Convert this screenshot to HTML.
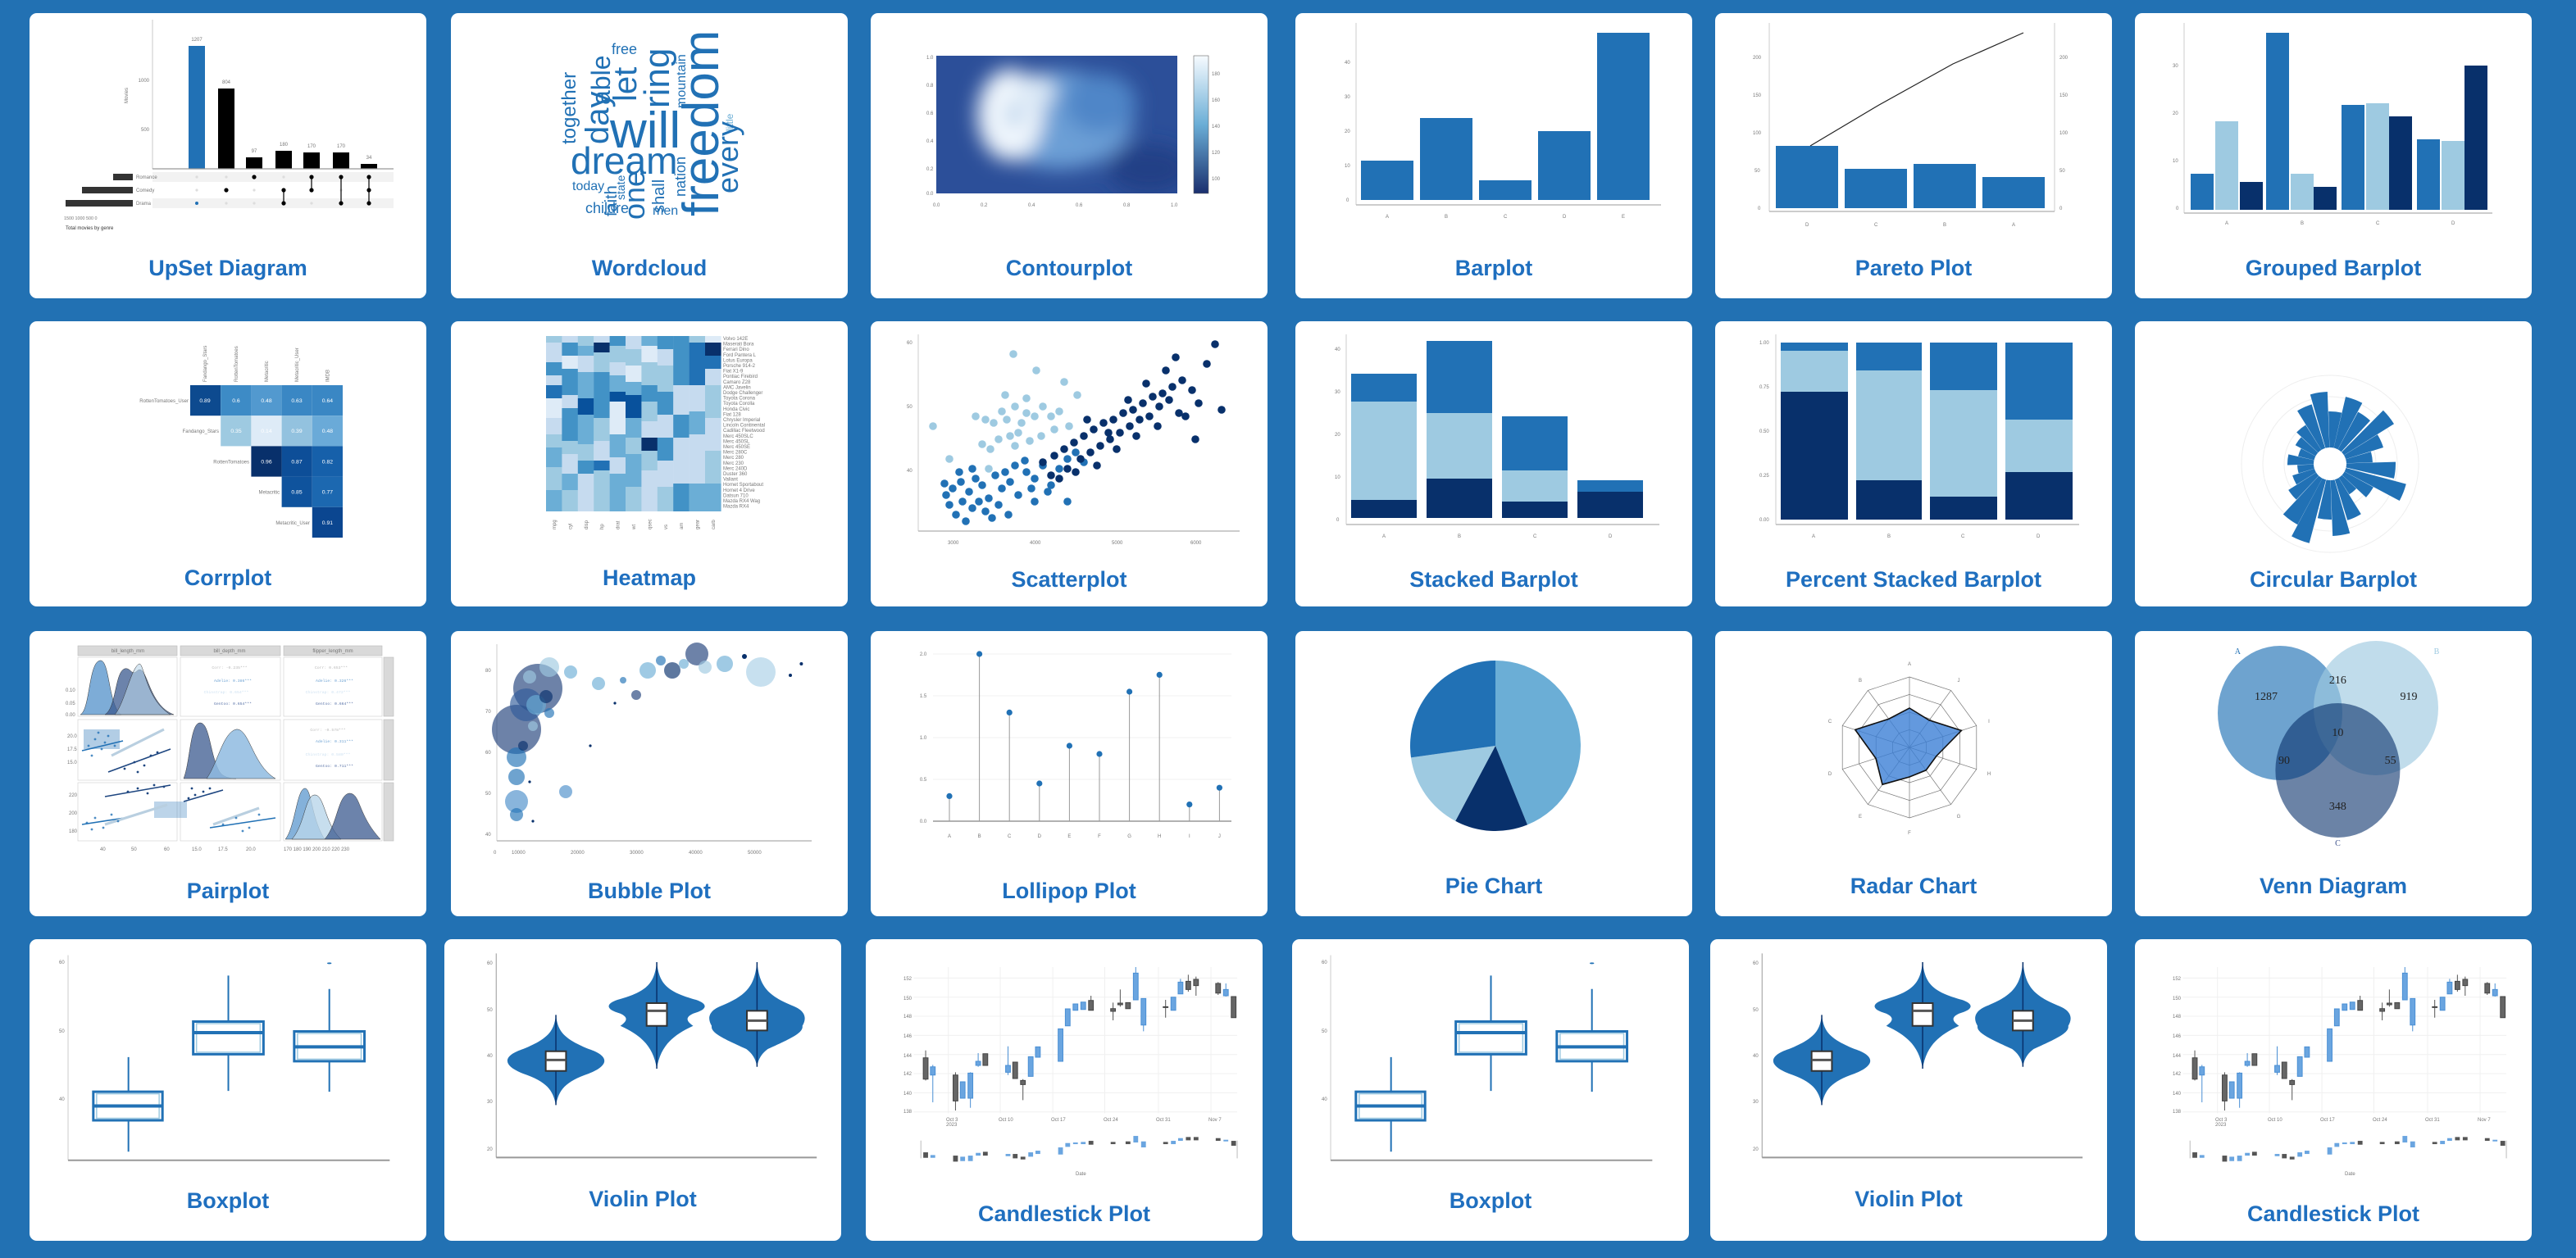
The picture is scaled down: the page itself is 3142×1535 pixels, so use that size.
<!DOCTYPE html>
<html><head><meta charset="utf-8">
<style>
html,body{margin:0;padding:0;}
body{width:3142px;height:1535px;background:#2271b3;position:relative;overflow:hidden;}
.c{position:absolute;background:#fff;border-radius:9px;width:484px;height:348px;overflow:hidden;}
.c.r4{height:368px;}
.c svg{display:block;width:100%;height:100%;}
.t{font-family:"Liberation Sans Narrow","Liberation Sans",sans-serif;font-weight:bold;font-size:13.5px;fill:#1f6fbf;text-anchor:middle;}
.s{font-family:"Liberation Sans",sans-serif;font-size:3px;fill:#777;}
.w{font-family:"Liberation Sans",sans-serif;fill:#2171b5;}
.v{font-family:"Liberation Serif",serif;font-size:7px;fill:#222;text-anchor:middle;}
.ns{vector-effect:non-scaling-stroke;}
</style></head><body>

<!-- ROW 1 -->
<div class="c" style="left:36px;top:16px"><svg viewBox="0 0 242 174">
<line x1="75" y1="4" x2="75" y2="95" stroke="#bbb" stroke-width=".4"/>
<text class="s" x="73" y="42" text-anchor="end" font-size="2.5">1000</text>
<text class="s" x="73" y="72" text-anchor="end" font-size="2.5">500</text>
<text class="s" x="60" y="55" transform="rotate(-90 60 55)" font-size="2.5">Movies</text>
<rect x="97" y="20" width="10" height="75" fill="#2171b5"/>
<rect x="115" y="46" width="10" height="49" fill="#000"/>
<rect x="132" y="88" width="10" height="7" fill="#000"/>
<rect x="150" y="84" width="10" height="11" fill="#000"/>
<rect x="167" y="85" width="10" height="10" fill="#000"/>
<rect x="185" y="85" width="10" height="10" fill="#000"/>
<rect x="202" y="92" width="10" height="3" fill="#000"/>
<g class="s" text-anchor="middle" font-size="3"><text x="102" y="17">1207</text><text x="120" y="43">804</text><text x="137" y="85">97</text><text x="155" y="81">180</text><text x="172" y="82">170</text><text x="190" y="82">170</text><text x="207" y="89">34</text></g>
<line x1="75" y1="95" x2="222" y2="95" stroke="#999" stroke-width=".6"/>
<rect x="75" y="97" width="147" height="6" fill="#f2f2f2"/>
<rect x="75" y="113" width="147" height="6" fill="#f2f2f2"/>
<g fill="#ddd"><circle cx="102" cy="100" r=".8"/><circle cx="120" cy="100" r=".8"/><circle cx="155" cy="100" r=".8"/><circle cx="102" cy="108" r=".8"/><circle cx="137" cy="108" r=".8"/><circle cx="190" cy="108" r=".8"/><circle cx="120" cy="116" r=".8"/><circle cx="137" cy="116" r=".8"/><circle cx="172" cy="116" r=".8"/></g>
<g fill="#000" stroke="#000" stroke-width=".6"><circle cx="120" cy="108" r="1"/><circle cx="137" cy="100" r="1"/><line x1="155" y1="108" x2="155" y2="116"/><circle cx="155" cy="108" r="1"/><circle cx="155" cy="116" r="1"/><line x1="172" y1="100" x2="172" y2="108"/><circle cx="172" cy="100" r="1"/><circle cx="172" cy="108" r="1"/><line x1="190" y1="100" x2="190" y2="116"/><circle cx="190" cy="100" r="1"/><circle cx="190" cy="116" r="1"/><line x1="207" y1="100" x2="207" y2="116"/><circle cx="207" cy="100" r="1"/><circle cx="207" cy="108" r="1"/><circle cx="207" cy="116" r="1"/></g>
<circle cx="102" cy="116" r="1" fill="#2171b5"/>
<rect x="51" y="98" width="12" height="4" fill="#333"/><rect x="32" y="106" width="31" height="4" fill="#333"/><rect x="22" y="114" width="41" height="4" fill="#333"/>
<g class="s" font-size="3"><text x="65" y="101">Romance</text><text x="65" y="109">Comedy</text><text x="65" y="117">Drama</text>
<text x="21" y="126" font-size="2.7">1500 1000 500  0</text><text x="22" y="132" fill="#333">Total movies by genre</text></g>
<text class="t" x="121" y="160">UpSet Diagram</text></svg></div>

<div class="c" style="left:550px;top:16px"><svg viewBox="0 0 242 174">
<text class="w" font-size="12" transform="translate(76,80) rotate(-90)">together</text>
<text class="w" font-size="20" transform="translate(96,80) rotate(-90)">day</text>
<text class="w" font-size="16" transform="translate(97,56) rotate(-90)">able</text>
<text class="w" font-size="9" x="98" y="25">free</text>
<text class="w" font-size="20" transform="translate(113,54) rotate(-90)">let</text>
<text class="w" font-size="22" transform="translate(133,58) rotate(-90)">ring</text>
<text class="w" font-size="8" transform="translate(143,58) rotate(-90)">mountain</text>
<text class="w" font-size="31" x="97" y="82">will</text>
<text class="w" font-size="31" transform="translate(163,124) rotate(-90)">freedom</text>
<text class="w" font-size="6" fill="#6baed6" transform="translate(172,72) rotate(-90)" style="fill:#6baed6">little</text>
<text class="w" font-size="18" transform="translate(175,110) rotate(-90)">every</text>
<text class="w" font-size="23" x="73" y="98">dream</text>
<text class="w" font-size="8" x="74" y="108">today</text>
<text class="w" font-size="10" transform="translate(101,124) rotate(-90)">faith</text>
<text class="w" font-size="7" transform="translate(106,114) rotate(-90)">state</text>
<text class="w" font-size="18" transform="translate(118,126) rotate(-90)">one</text>
<text class="w" font-size="10" transform="translate(130,122) rotate(-90)">shall</text>
<text class="w" font-size="9" transform="translate(143,112) rotate(-90)">nation</text>
<text class="w" font-size="9" x="82" y="122">childre</text>
<text class="w" font-size="8" x="123" y="123">men</text>
<text class="t" x="121" y="160">Wordcloud</text></svg></div>

<div class="c" style="left:1062px;top:16px"><svg viewBox="0 0 242 174">
<defs><filter id="bl" x="-50%" y="-50%" width="200%" height="200%"><feGaussianBlur stdDeviation="6"/></filter>
<linearGradient id="cb" x1="0" y1="0" x2="0" y2="1"><stop offset="0" stop-color="#f7fbff"/><stop offset=".5" stop-color="#6baed6"/><stop offset="1" stop-color="#1a2f6e"/></linearGradient>
<clipPath id="cp"><rect x="40" y="26" width="147" height="84"/></clipPath></defs>
<rect x="40" y="26" width="147" height="84" fill="#2c4f99"/>
<g clip-path="url(#cp)" filter="url(#bl)">
<ellipse cx="115" cy="65" rx="45" ry="30" fill="#6c9fd6"/>
<ellipse cx="140" cy="55" rx="22" ry="18" fill="#4f86c8"/>
<ellipse cx="85" cy="62" rx="20" ry="28" fill="#eef5fc"/>
<ellipse cx="100" cy="48" rx="12" ry="10" fill="#dce9f6"/>
<ellipse cx="88" cy="62" rx="4" ry="5" fill="#8ab6e0"/>
<ellipse cx="170" cy="95" rx="25" ry="15" fill="#243f86"/>
</g>
<rect x="197" y="26" width="9" height="84" fill="url(#cb)" stroke="#666" stroke-width=".3"/>
<g class="s" font-size="2.5"><text x="34" y="28">1.0</text><text x="34" y="45">0.8</text><text x="34" y="62">0.6</text><text x="34" y="79">0.4</text><text x="34" y="96">0.2</text><text x="34" y="111">0.0</text>
<text x="38" y="118">0.0</text><text x="67" y="118">0.2</text><text x="96" y="118">0.4</text><text x="125" y="118">0.6</text><text x="154" y="118">0.8</text><text x="183" y="118">1.0</text>
<text x="208" y="38">180</text><text x="208" y="54">160</text><text x="208" y="70">140</text><text x="208" y="86">120</text><text x="208" y="102">100</text></g>
<text class="t" x="121" y="160">Contourplot</text></svg></div>

<div class="c" style="left:1580px;top:16px"><svg viewBox="0 0 242 174">
<line x1="37" y1="6" x2="37" y2="117" stroke="#ccc" stroke-width=".5"/><line x1="37" y1="117" x2="223" y2="117" stroke="#bbb" stroke-width=".8"/>
<g fill="#2171b5"><rect x="40" y="90" width="32" height="24"/><rect x="76" y="64" width="32" height="50"/><rect x="112" y="102" width="32" height="12"/><rect x="148" y="72" width="32" height="42"/><rect x="184" y="12" width="32" height="102"/></g>
<g class="s" font-size="3"><text x="31" y="115">0</text><text x="30" y="94">10</text><text x="30" y="73">20</text><text x="30" y="52">30</text><text x="30" y="31">40</text>
<text x="55" y="125">A</text><text x="91" y="125">B</text><text x="127" y="125">C</text><text x="163" y="125">D</text><text x="199" y="125">E</text></g>
<text class="t" x="121" y="160">Barplot</text></svg></div>

<div class="c" style="left:2092px;top:16px"><svg viewBox="0 0 242 174">
<line x1="33" y1="6" x2="33" y2="121" stroke="#ccc" stroke-width=".5"/><line x1="207" y1="6" x2="207" y2="121" stroke="#ccc" stroke-width=".5"/><line x1="33" y1="121" x2="207" y2="121" stroke="#bbb" stroke-width=".8"/>
<g fill="#2171b5"><rect x="37" y="81" width="38" height="38"/><rect x="79" y="95" width="38" height="24"/><rect x="121" y="92" width="38" height="27"/><rect x="163" y="100" width="38" height="19"/></g>
<polyline points="58,81 100,56 145,31 188,12" fill="none" stroke="#222" stroke-width=".6"/>
<g class="s" font-size="3"><text x="26" y="120">0</text><text x="24" y="97">50</text><text x="23" y="74">100</text><text x="23" y="51">150</text><text x="23" y="28">200</text>
<text x="210" y="120">0</text><text x="210" y="97">50</text><text x="210" y="74">100</text><text x="210" y="51">150</text><text x="210" y="28">200</text>
<text x="55" y="130">D</text><text x="97" y="130">C</text><text x="139" y="130">B</text><text x="181" y="130">A</text></g>
<text class="t" x="121" y="160">Pareto Plot</text></svg></div>

<div class="c" style="left:2604px;top:16px"><svg viewBox="0 0 242 174">
<line x1="30" y1="6" x2="30" y2="122" stroke="#ccc" stroke-width=".5"/><line x1="30" y1="122" x2="218" y2="122" stroke="#bbb" stroke-width=".8"/>
<g fill="#2171b5"><rect x="34" y="98" width="14" height="22"/><rect x="80" y="12" width="14" height="108"/><rect x="126" y="56" width="14" height="64"/><rect x="172" y="77" width="14" height="43"/></g>
<g fill="#9ecae1"><rect x="49" y="66" width="14" height="54"/><rect x="95" y="98" width="14" height="22"/><rect x="141" y="55" width="14" height="65"/><rect x="187" y="78" width="14" height="42"/></g>
<g fill="#08306b"><rect x="64" y="103" width="14" height="17"/><rect x="109" y="106" width="14" height="14"/><rect x="155" y="63" width="14" height="57"/><rect x="201" y="32" width="14" height="88"/></g>
<g class="s" font-size="3"><text x="25" y="120">0</text><text x="23" y="91">10</text><text x="23" y="62">20</text><text x="23" y="33">30</text>
<text x="55" y="129">A</text><text x="101" y="129">B</text><text x="147" y="129">C</text><text x="193" y="129">D</text></g>
<text class="t" x="121" y="160">Grouped Barplot</text></svg></div>

<!-- ROW 2 -->
<div class="c" style="left:36px;top:392px"><svg viewBox="0 0 242 174">
<g font-family="Liberation Sans" font-size="3.4" fill="#fff" text-anchor="middle">
<rect x="98" y="39" width="18.6" height="18.6" fill="#0d4a8f"/><rect x="116.6" y="39" width="18.6" height="18.6" fill="#3d8bc6"/><rect x="135.2" y="39" width="18.6" height="18.6" fill="#5299cf"/><rect x="153.8" y="39" width="18.6" height="18.6" fill="#3a87c4"/><rect x="172.4" y="39" width="18.6" height="18.6" fill="#3a87c4"/>
<rect x="116.6" y="57.6" width="18.6" height="18.6" fill="#9ecae1"/><rect x="135.2" y="57.6" width="18.6" height="18.6" fill="#deebf7"/><rect x="153.8" y="57.6" width="18.6" height="18.6" fill="#93c2df"/><rect x="172.4" y="57.6" width="18.6" height="18.6" fill="#6aaad8"/>
<rect x="135.2" y="76.2" width="18.6" height="18.6" fill="#08306b"/><rect x="153.8" y="76.2" width="18.6" height="18.6" fill="#0d4e98"/><rect x="172.4" y="76.2" width="18.6" height="18.6" fill="#1660aa"/>
<rect x="153.8" y="94.8" width="18.6" height="18.6" fill="#0f539d"/><rect x="172.4" y="94.8" width="18.6" height="18.6" fill="#1c68b0"/>
<rect x="172.4" y="113.4" width="18.6" height="18.6" fill="#0b4690"/>
<text x="107" y="49.5">0.89</text><text x="126" y="49.5">0.6</text><text x="144.5" y="49.5">0.48</text><text x="163" y="49.5">0.63</text><text x="181.7" y="49.5">0.64</text>
<text x="126" y="68">0.35</text><text x="144.5" y="68">0.14</text><text x="163" y="68">0.39</text><text x="181.7" y="68">0.48</text>
<text x="144.5" y="86.7">0.96</text><text x="163" y="86.7">0.87</text><text x="181.7" y="86.7">0.82</text>
<text x="163" y="105.3">0.85</text><text x="181.7" y="105.3">0.77</text><text x="181.7" y="124">0.91</text></g>
<g class="s" font-size="3.2" fill="#333" text-anchor="end"><text x="97" y="49.5">RottenTomatoes_User</text><text x="115.5" y="68">Fandango_Stars</text><text x="134" y="86.7">RottenTomatoes</text><text x="152.6" y="105.3">Metacritic</text><text x="171" y="124">Metacritic_User</text></g>
<g class="s" font-size="3.2" fill="#333"><text transform="translate(108,37) rotate(-90)">Fandango_Stars</text><text transform="translate(127,37) rotate(-90)">RottenTomatoes</text><text transform="translate(145.5,37) rotate(-90)">Metacritic</text><text transform="translate(164,37) rotate(-90)">Metacritic_User</text><text transform="translate(182.7,37) rotate(-90)">IMDB</text></g>
<text class="t" x="121" y="161">Corrplot</text></svg></div>

<div class="c" style="left:550px;top:392px"><svg viewBox="0 0 242 174">
<g>
<g transform="translate(58,0)"><rect y="9" width="9.8" height="4" fill="#9ecae1"/><rect y="13" width="9.8" height="12" fill="#c6dbef"/><rect y="25" width="9.8" height="8" fill="#4292c6"/><rect y="33" width="9.8" height="6" fill="#c6dbef"/><rect y="39" width="9.8" height="8" fill="#2171b5"/><rect y="47" width="9.8" height="12" fill="#deebf7"/><rect y="59" width="9.8" height="10" fill="#c6dbef"/><rect y="69" width="9.8" height="8" fill="#9ecae1"/><rect y="77" width="9.8" height="12" fill="#6baed6"/><rect y="89" width="9.8" height="14" fill="#9ecae1"/><rect y="103" width="9.8" height="13" fill="#6baed6"/></g>
<g transform="translate(67.7,0)"><rect y="9" width="9.8" height="4" fill="#c6dbef"/><rect y="13" width="9.8" height="8" fill="#4292c6"/><rect y="21" width="9.8" height="8" fill="#deebf7"/><rect y="29" width="9.8" height="16" fill="#4292c6"/><rect y="45" width="9.8" height="8" fill="#c6dbef"/><rect y="53" width="9.8" height="20" fill="#4292c6"/><rect y="73" width="9.8" height="8" fill="#9ecae1"/><rect y="81" width="9.8" height="12" fill="#c6dbef"/><rect y="93" width="9.8" height="10" fill="#6baed6"/><rect y="103" width="9.8" height="13" fill="#9ecae1"/></g>
<g transform="translate(77.4,0)"><rect y="9" width="9.8" height="6" fill="#9ecae1"/><rect y="15" width="9.8" height="6" fill="#6baed6"/><rect y="21" width="9.8" height="10" fill="#c6dbef"/><rect y="31" width="9.8" height="16" fill="#6baed6"/><rect y="47" width="9.8" height="10" fill="#08519c"/><rect y="57" width="9.8" height="18" fill="#6baed6"/><rect y="75" width="9.8" height="10" fill="#9ecae1"/><rect y="85" width="9.8" height="8" fill="#4292c6"/><rect y="93" width="9.8" height="23" fill="#c6dbef"/></g>
<g transform="translate(87.1,0)"><rect y="9" width="9.8" height="4" fill="#c6dbef"/><rect y="13" width="9.8" height="6" fill="#08306b"/><rect y="19" width="9.8" height="12" fill="#9ecae1"/><rect y="31" width="9.8" height="14" fill="#4292c6"/><rect y="45" width="9.8" height="14" fill="#4292c6"/><rect y="59" width="9.8" height="14" fill="#9ecae1"/><rect y="73" width="9.8" height="12" fill="#c6dbef"/><rect y="85" width="9.8" height="6" fill="#2171b5"/><rect y="91" width="9.8" height="25" fill="#9ecae1"/></g>
<g transform="translate(96.8,0)"><rect y="9" width="9.8" height="6" fill="#4292c6"/><rect y="15" width="9.8" height="10" fill="#9ecae1"/><rect y="25" width="9.8" height="8" fill="#c6dbef"/><rect y="33" width="9.8" height="10" fill="#6baed6"/><rect y="43" width="9.8" height="6" fill="#08519c"/><rect y="49" width="9.8" height="20" fill="#deebf7"/><rect y="69" width="9.8" height="14" fill="#6baed6"/><rect y="83" width="9.8" height="10" fill="#c6dbef"/><rect y="93" width="9.8" height="23" fill="#6baed6"/></g>
<g transform="translate(106.5,0)"><rect y="9" width="9.8" height="8" fill="#c6dbef"/><rect y="17" width="9.8" height="10" fill="#9ecae1"/><rect y="27" width="9.8" height="10" fill="#deebf7"/><rect y="37" width="9.8" height="8" fill="#6baed6"/><rect y="45" width="9.8" height="14" fill="#08519c"/><rect y="59" width="9.8" height="12" fill="#6baed6"/><rect y="71" width="9.8" height="10" fill="#9ecae1"/><rect y="81" width="9.8" height="20" fill="#6baed6"/><rect y="101" width="9.8" height="15" fill="#9ecae1"/></g>
<g transform="translate(116.2,0)"><rect y="9" width="9.8" height="6" fill="#6baed6"/><rect y="15" width="9.8" height="10" fill="#deebf7"/><rect y="25" width="9.8" height="14" fill="#9ecae1"/><rect y="39" width="9.8" height="10" fill="#4292c6"/><rect y="49" width="9.8" height="12" fill="#9ecae1"/><rect y="61" width="9.8" height="10" fill="#c6dbef"/><rect y="71" width="9.8" height="8" fill="#08306b"/><rect y="79" width="9.8" height="12" fill="#9ecae1"/><rect y="91" width="9.8" height="25" fill="#c6dbef"/></g>
<g transform="translate(125.9,0)"><rect y="9" width="9.8" height="8" fill="#4292c6"/><rect y="17" width="9.8" height="10" fill="#c6dbef"/><rect y="27" width="9.8" height="16" fill="#9ecae1"/><rect y="43" width="9.8" height="14" fill="#4292c6"/><rect y="57" width="9.8" height="14" fill="#c6dbef"/><rect y="71" width="9.8" height="14" fill="#4292c6"/><rect y="85" width="9.8" height="16" fill="#c6dbef"/><rect y="101" width="9.8" height="15" fill="#9ecae1"/></g>
<g transform="translate(135.6,0)"><rect y="9" width="9.8" height="30" fill="#4292c6"/><rect y="39" width="9.8" height="18" fill="#c6dbef"/><rect y="57" width="9.8" height="14" fill="#4292c6"/><rect y="71" width="9.8" height="28" fill="#c6dbef"/><rect y="99" width="9.8" height="17" fill="#4292c6"/></g>
<g transform="translate(145.3,0)"><rect y="9" width="9.8" height="4" fill="#9ecae1"/><rect y="13" width="9.8" height="26" fill="#2171b5"/><rect y="39" width="9.8" height="16" fill="#c6dbef"/><rect y="55" width="9.8" height="14" fill="#6baed6"/><rect y="69" width="9.8" height="30" fill="#c6dbef"/><rect y="99" width="9.8" height="17" fill="#6baed6"/></g>
<g transform="translate(155,0)"><rect y="9" width="9.8" height="4" fill="#deebf7"/><rect y="13" width="9.8" height="8" fill="#08306b"/><rect y="21" width="9.8" height="8" fill="#2171b5"/><rect y="29" width="9.8" height="10" fill="#c6dbef"/><rect y="39" width="9.8" height="20" fill="#9ecae1"/><rect y="59" width="9.8" height="20" fill="#c6dbef"/><rect y="79" width="9.8" height="20" fill="#9ecae1"/><rect y="99" width="9.8" height="17" fill="#6baed6"/></g>
</g>
<g class="s" font-size="2.3" fill="#333"><text x="166" y="11.5">Volvo 142E</text><text x="166" y="14.8">Maserati Bora</text><text x="166" y="18.1">Ferrari Dino</text><text x="166" y="21.4">Ford Pantera L</text><text x="166" y="24.7">Lotus Europa</text><text x="166" y="28">Porsche 914-2</text><text x="166" y="31.3">Fiat X1-9</text><text x="166" y="34.6">Pontiac Firebird</text><text x="166" y="37.9">Camaro Z28</text><text x="166" y="41.2">AMC Javelin</text><text x="166" y="44.5">Dodge Challenger</text><text x="166" y="47.8">Toyota Corona</text><text x="166" y="51.1">Toyota Corolla</text><text x="166" y="54.4">Honda Civic</text><text x="166" y="57.7">Fiat 128</text><text x="166" y="61">Chrysler Imperial</text><text x="166" y="64.3">Lincoln Continental</text><text x="166" y="67.6">Cadillac Fleetwood</text><text x="166" y="70.9">Merc 450SLC</text><text x="166" y="74.2">Merc 450SL</text><text x="166" y="77.5">Merc 450SE</text><text x="166" y="80.8">Merc 280C</text><text x="166" y="84.1">Merc 280</text><text x="166" y="87.4">Merc 230</text><text x="166" y="90.7">Merc 240D</text><text x="166" y="94">Duster 360</text><text x="166" y="97.3">Valiant</text><text x="166" y="100.6">Hornet Sportabout</text><text x="166" y="103.9">Hornet 4 Drive</text><text x="166" y="107.2">Datsun 710</text><text x="166" y="110.5">Mazda RX4 Wag</text><text x="166" y="113.8">Mazda RX4</text></g>
<g class="s" font-size="2.5" fill="#333"><text transform="translate(64,127) rotate(-90)">mpg</text><text transform="translate(73.7,127) rotate(-90)">cyl</text><text transform="translate(83.4,127) rotate(-90)">disp</text><text transform="translate(93.1,127) rotate(-90)">hp</text><text transform="translate(102.8,127) rotate(-90)">drat</text><text transform="translate(112.5,127) rotate(-90)">wt</text><text transform="translate(122.2,127) rotate(-90)">qsec</text><text transform="translate(131.9,127) rotate(-90)">vs</text><text transform="translate(141.6,127) rotate(-90)">am</text><text transform="translate(151.3,127) rotate(-90)">gear</text><text transform="translate(161,127) rotate(-90)">carb</text></g>
<text class="t" x="121" y="161">Heatmap</text></svg></div>

<div class="c" style="left:1062px;top:392px"><svg viewBox="0 0 242 174">
<line x1="29" y1="8" x2="29" y2="128" stroke="#ccc" stroke-width=".5"/><line x1="29" y1="128" x2="225" y2="128" stroke="#bbb" stroke-width=".8"/>
<g class="s" font-size="3"><text x="22" y="14">60</text><text x="22" y="53">50</text><text x="22" y="92">40</text><text x="47" y="136">3000</text><text x="97" y="136">4000</text><text x="147" y="136">5000</text><text x="195" y="136">6000</text></g>
<g fill="#9ecae1"><circle cx="87" cy="20" r="2.4"/><circle cx="101" cy="30" r="2.4"/><circle cx="118" cy="37" r="2.4"/><circle cx="126" cy="45" r="2.4"/><circle cx="80" cy="55" r="2.4"/><circle cx="88" cy="52" r="2.4"/><circle cx="95" cy="56" r="2.4"/><circle cx="100" cy="58" r="2.4"/><circle cx="105" cy="52" r="2.4"/><circle cx="70" cy="60" r="2.4"/><circle cx="75" cy="62" r="2.4"/><circle cx="83" cy="60" r="2.4"/><circle cx="92" cy="62" r="2.4"/><circle cx="110" cy="58" r="2.4"/><circle cx="115" cy="55" r="2.4"/><circle cx="78" cy="72" r="2.4"/><circle cx="85" cy="70" r="2.4"/><circle cx="90" cy="68" r="2.4"/><circle cx="97" cy="73" r="2.4"/><circle cx="104" cy="70" r="2.4"/><circle cx="68" cy="75" r="2.4"/><circle cx="73" cy="78" r="2.4"/><circle cx="64" cy="58" r="2.4"/><circle cx="38" cy="64" r="2.4"/><circle cx="48" cy="84" r="2.4"/><circle cx="88" cy="76" r="2.4"/><circle cx="121" cy="64" r="2.4"/><circle cx="112" cy="66" r="2.4"/><circle cx="95" cy="47" r="2.4"/><circle cx="82" cy="45" r="2.4"/><circle cx="72" cy="90" r="2.4"/></g>
<g fill="#2171b5"><circle cx="45" cy="99" r="2.4"/><circle cx="50" cy="102" r="2.4"/><circle cx="55" cy="98" r="2.4"/><circle cx="60" cy="104" r="2.4"/><circle cx="64" cy="96" r="2.4"/><circle cx="68" cy="100" r="2.4"/><circle cx="72" cy="108" r="2.4"/><circle cx="76" cy="94" r="2.4"/><circle cx="80" cy="102" r="2.4"/><circle cx="85" cy="98" r="2.4"/><circle cx="90" cy="106" r="2.4"/><circle cx="95" cy="92" r="2.4"/><circle cx="100" cy="96" r="2.4"/><circle cx="105" cy="88" r="2.4"/><circle cx="110" cy="100" r="2.4"/><circle cx="115" cy="90" r="2.4"/><circle cx="120" cy="84" r="2.4"/><circle cx="125" cy="80" r="2.4"/><circle cx="130" cy="86" r="2.4"/><circle cx="48" cy="112" r="2.4"/><circle cx="56" cy="110" r="2.4"/><circle cx="62" cy="114" r="2.4"/><circle cx="70" cy="116" r="2.4"/><circle cx="78" cy="112" r="2.4"/><circle cx="84" cy="118" r="2.4"/><circle cx="52" cy="118" r="2.4"/><circle cx="58" cy="122" r="2.4"/><circle cx="66" cy="110" r="2.4"/><circle cx="88" cy="88" r="2.4"/><circle cx="94" cy="85" r="2.4"/><circle cx="100" cy="110" r="2.4"/><circle cx="108" cy="104" r="2.4"/><circle cx="46" cy="106" r="2.4"/><circle cx="74" cy="120" r="2.4"/><circle cx="120" cy="110" r="2.4"/><circle cx="62" cy="90" r="2.4"/><circle cx="82" cy="92" r="2.4"/><circle cx="98" cy="102" r="2.4"/><circle cx="54" cy="92" r="2.4"/></g>
<g fill="#08306b"><circle cx="105" cy="86" r="2.4"/><circle cx="112" cy="82" r="2.4"/><circle cx="118" cy="78" r="2.4"/><circle cx="124" cy="74" r="2.4"/><circle cx="130" cy="70" r="2.4"/><circle cx="136" cy="66" r="2.4"/><circle cx="142" cy="62" r="2.4"/><circle cx="148" cy="60" r="2.4"/><circle cx="154" cy="56" r="2.4"/><circle cx="160" cy="54" r="2.4"/><circle cx="166" cy="50" r="2.4"/><circle cx="172" cy="46" r="2.4"/><circle cx="178" cy="44" r="2.4"/><circle cx="184" cy="40" r="2.4"/><circle cx="190" cy="36" r="2.4"/><circle cx="196" cy="42" r="2.4"/><circle cx="200" cy="50" r="2.4"/><circle cx="205" cy="26" r="2.4"/><circle cx="210" cy="14" r="2.4"/><circle cx="214" cy="54" r="2.4"/><circle cx="120" cy="90" r="2.4"/><circle cx="128" cy="84" r="2.4"/><circle cx="134" cy="80" r="2.4"/><circle cx="140" cy="76" r="2.4"/><circle cx="146" cy="72" r="2.4"/><circle cx="152" cy="68" r="2.4"/><circle cx="158" cy="64" r="2.4"/><circle cx="164" cy="60" r="2.4"/><circle cx="170" cy="58" r="2.4"/><circle cx="176" cy="52" r="2.4"/><circle cx="182" cy="48" r="2.4"/><circle cx="188" cy="56" r="2.4"/><circle cx="115" cy="96" r="2.4"/><circle cx="125" cy="92" r="2.4"/><circle cx="138" cy="88" r="2.4"/><circle cx="150" cy="78" r="2.4"/><circle cx="162" cy="70" r="2.4"/><circle cx="175" cy="64" r="2.4"/><circle cx="192" cy="58" r="2.4"/><circle cx="145" cy="68" r="2.4"/><circle cx="157" cy="48" r="2.4"/><circle cx="168" cy="38" r="2.4"/><circle cx="180" cy="30" r="2.4"/><circle cx="132" cy="60" r="2.4"/><circle cx="110" cy="94" r="2.4"/><circle cx="198" cy="72" r="2.4"/><circle cx="186" cy="22" r="2.4"/></g>
<text class="t" x="121" y="162">Scatterplot</text></svg></div>

<div class="c" style="left:1580px;top:392px"><svg viewBox="0 0 242 174">
<line x1="31" y1="8" x2="31" y2="124" stroke="#ccc" stroke-width=".5"/><line x1="31" y1="124" x2="222" y2="124" stroke="#bbb" stroke-width=".8"/>
<rect x="34" y="32" width="40" height="17" fill="#2171b5"/><rect x="34" y="49" width="40" height="60" fill="#9ecae1"/><rect x="34" y="109" width="40" height="11" fill="#08306b"/>
<rect x="80" y="12" width="40" height="44" fill="#2171b5"/><rect x="80" y="56" width="40" height="40" fill="#9ecae1"/><rect x="80" y="96" width="40" height="24" fill="#08306b"/>
<rect x="126" y="58" width="40" height="33" fill="#2171b5"/><rect x="126" y="91" width="40" height="19" fill="#9ecae1"/><rect x="126" y="110" width="40" height="10" fill="#08306b"/>
<rect x="172" y="97" width="40" height="7" fill="#2171b5"/><rect x="172" y="104" width="40" height="16" fill="#08306b"/>
<g class="s" font-size="3"><text x="25" y="122">0</text><text x="24" y="96">10</text><text x="24" y="70">20</text><text x="24" y="44">30</text><text x="24" y="18">40</text><text x="53" y="132">A</text><text x="99" y="132">B</text><text x="145" y="132">C</text><text x="191" y="132">D</text></g>
<text class="t" x="121" y="162">Stacked Barplot</text></svg></div>

<div class="c" style="left:2092px;top:392px"><svg viewBox="0 0 242 174">
<line x1="37" y1="8" x2="37" y2="124" stroke="#ccc" stroke-width=".5"/><line x1="37" y1="124" x2="222" y2="124" stroke="#bbb" stroke-width=".8"/>
<rect x="40" y="13" width="41" height="5" fill="#2171b5"/><rect x="40" y="18" width="41" height="25" fill="#9ecae1"/><rect x="40" y="43" width="41" height="78" fill="#08306b"/>
<rect x="86" y="13" width="40" height="17" fill="#2171b5"/><rect x="86" y="30" width="40" height="67" fill="#9ecae1"/><rect x="86" y="97" width="40" height="24" fill="#08306b"/>
<rect x="131" y="13" width="41" height="29" fill="#2171b5"/><rect x="131" y="42" width="41" height="65" fill="#9ecae1"/><rect x="131" y="107" width="41" height="14" fill="#08306b"/>
<rect x="177" y="13" width="41" height="47" fill="#2171b5"/><rect x="177" y="60" width="41" height="32" fill="#9ecae1"/><rect x="177" y="92" width="41" height="29" fill="#08306b"/>
<g class="s" font-size="3"><text x="27" y="122">0.00</text><text x="27" y="95">0.25</text><text x="27" y="68">0.50</text><text x="27" y="41">0.75</text><text x="27" y="14">1.00</text><text x="59" y="132">A</text><text x="105" y="132">B</text><text x="150" y="132">C</text><text x="196" y="132">D</text></g>
<text class="t" x="121" y="162">Percent Stacked Barplot</text></svg></div>

<div class="c" style="left:2604px;top:392px"><svg viewBox="0 0 242 174">
<g fill="none" stroke="#eee" stroke-width=".5"><circle cx="119" cy="87" r="15"/><circle cx="119" cy="87" r="28"/><circle cx="119" cy="87" r="41"/><circle cx="119" cy="87" r="54"/></g>
<g fill="none" stroke="#2171b5" transform="translate(119,87)">
<circle r="25" stroke-width="30" pathLength="360" stroke-dasharray="13 347" transform="rotate(0)"/>
<circle r="29" stroke-width="38" pathLength="360" stroke-dasharray="13 347" transform="rotate(15)"/>
<circle r="20" stroke-width="20" pathLength="360" stroke-dasharray="13 347" transform="rotate(30)"/>
<circle r="16" stroke-width="12" pathLength="360" stroke-dasharray="13 347" transform="rotate(45)"/>
<circle r="23" stroke-width="26" pathLength="360" stroke-dasharray="13 347" transform="rotate(60)"/>
<circle r="27" stroke-width="34" pathLength="360" stroke-dasharray="13 347" transform="rotate(75)"/>
<circle r="22" stroke-width="24" pathLength="360" stroke-dasharray="13 347" transform="rotate(90)"/>
<circle r="30" stroke-width="40" pathLength="360" stroke-dasharray="13 347" transform="rotate(105)"/>
<circle r="26" stroke-width="32" pathLength="360" stroke-dasharray="13 347" transform="rotate(120)"/>
<circle r="20" stroke-width="20" pathLength="360" stroke-dasharray="13 347" transform="rotate(135)"/>
<circle r="17" stroke-width="14" pathLength="360" stroke-dasharray="13 347" transform="rotate(150)"/>
<circle r="15" stroke-width="10" pathLength="360" stroke-dasharray="13 347" transform="rotate(165)"/>
<circle r="18" stroke-width="16" pathLength="360" stroke-dasharray="13 347" transform="rotate(180)"/>
<circle r="15" stroke-width="10" pathLength="360" stroke-dasharray="13 347" transform="rotate(195)"/>
<circle r="17" stroke-width="14" pathLength="360" stroke-dasharray="13 347" transform="rotate(210)"/>
<circle r="19" stroke-width="18" pathLength="360" stroke-dasharray="13 347" transform="rotate(225)"/>
<circle r="24" stroke-width="28" pathLength="360" stroke-dasharray="13 347" transform="rotate(240)"/>
<circle r="27" stroke-width="34" pathLength="360" stroke-dasharray="13 347" transform="rotate(255)"/>
<circle r="21" stroke-width="22" pathLength="360" stroke-dasharray="13 347" transform="rotate(270)"/>
<circle r="26" stroke-width="32" pathLength="360" stroke-dasharray="13 347" transform="rotate(285)"/>
<circle r="23" stroke-width="26" pathLength="360" stroke-dasharray="13 347" transform="rotate(300)"/>
<circle r="28" stroke-width="36" pathLength="360" stroke-dasharray="13 347" transform="rotate(315)"/>
<circle r="22" stroke-width="24" pathLength="360" stroke-dasharray="13 347" transform="rotate(330)"/>
<circle r="18" stroke-width="16" pathLength="360" stroke-dasharray="13 347" transform="rotate(345)"/>
</g>
<text class="t" x="121" y="162">Circular Barplot</text></svg></div>

<!-- ROW 3 -->
<div class="c" style="left:36px;top:770px"><svg viewBox="0 0 242 174">
<g fill="#d9d9d9" stroke="#bbb" stroke-width=".3"><rect x="29.5" y="9" width="60.5" height="6"/><rect x="92" y="9" width="61" height="6"/><rect x="155" y="9" width="60" height="6"/><rect x="216" y="16" width="6" height="36"/><rect x="216" y="54" width="6" height="37"/><rect x="216" y="92.5" width="6" height="35.5"/></g>
<g class="s" font-size="2.3" fill="#333" text-anchor="middle"><text x="60" y="13">bill_length_mm</text><text x="122" y="13">bill_depth_mm</text><text x="185" y="13">flipper_length_mm</text></g>
<g fill="#fff" stroke="#ccc" stroke-width=".3"><rect x="29.5" y="16" width="60.5" height="36"/><rect x="92" y="16" width="61" height="36"/><rect x="155" y="16" width="60" height="36"/><rect x="29.5" y="54" width="60.5" height="37"/><rect x="92" y="54" width="61" height="37"/><rect x="155" y="54" width="60" height="37"/><rect x="29.5" y="92.5" width="60.5" height="35.5"/><rect x="92" y="92.5" width="61" height="35.5"/><rect x="155" y="92.5" width="60" height="35.5"/></g>
<g stroke="#333" stroke-width=".25">
<path d="M31,51 C37,48 36,19 43,18 C49,17 48,46 56,51Z" fill="#6fa3d3" fill-opacity=".9"/>
<path d="M46,51 C53,47 52,25 58,23 C62,22 62,28 66,24 C72,20 72,45 88,51Z" fill="#3b5a8f" fill-opacity=".75"/>
<path d="M52,51 C58,44 62,22 67,20 C70,20 71,42 86,51Z" fill="#b9d6ea" fill-opacity=".6"/>
<path d="M94,90 C98,80 98,56 104,56 C110,56 110,76 116,86 C118,89 122,90 126,90Z" fill="#3b5a8f" fill-opacity=".75"/>
<path d="M108,90 C115,80 118,62 126,60 C134,59 136,82 150,90Z" fill="#8fbbe0" fill-opacity=".85"/>
<path d="M156,127 C162,120 163,96 168,96 C172,96 172,115 180,127Z" fill="#6fa3d3" fill-opacity=".85"/>
<path d="M160,127 C168,118 168,100 174,100 C180,100 180,118 190,127Z" fill="#b9d6ea" fill-opacity=".8"/>
<path d="M180,127 C188,118 188,100 195,99 C202,99 200,112 214,127Z" fill="#3b5a8f" fill-opacity=".75"/>
</g>
<g font-family="Liberation Mono" font-size="2.4" text-anchor="middle"><text x="122" y="23" fill="#bbb">Corr: -0.235***</text><text x="124" y="31" fill="#6fa3d3">Adelie: 0.386***</text><text x="120" y="38" fill="#cfe2f2">Chinstrap: 0.654***</text><text x="124" y="45" fill="#5b74a8">Gentoo: 0.654***</text>
<text x="184" y="23" fill="#bbb">Corr: 0.653***</text><text x="186" y="31" fill="#6fa3d3">Adelie: 0.326***</text><text x="182" y="38" fill="#cfe2f2">Chinstrap: 0.472***</text><text x="186" y="45" fill="#5b74a8">Gentoo: 0.664***</text>
<text x="182" y="61" fill="#bbb">Corr: -0.578***</text><text x="186" y="68" fill="#6fa3d3">Adelie: 0.311***</text><text x="182" y="76" fill="#cfe2f2">Chinstrap: 0.580***</text><text x="186" y="83" fill="#5b74a8">Gentoo: 0.711***</text></g>
<g fill="#2171b5"><rect x="33" y="60" width="22" height="12" fill-opacity=".35"/><rect x="76" y="104" width="20" height="10" fill-opacity=".3"/></g>
<g stroke-width=".8"><line x1="32" y1="73" x2="57" y2="67" stroke="#2171b5"/><line x1="50" y1="76" x2="82" y2="60" stroke="#b9cfe0" stroke-width="1.6"/><line x1="48" y1="86" x2="86" y2="72" stroke="#1e4680"/>
<line x1="46" y1="101" x2="86" y2="94" stroke="#1e4680"/><line x1="32" y1="118" x2="58" y2="114" stroke="#2171b5"/><line x1="46" y1="118" x2="84" y2="106" stroke="#b9cfe0" stroke-width="1.6"/>
<line x1="94" y1="104" x2="118" y2="97" stroke="#1e4680"/><line x1="110" y1="120" x2="150" y2="114" stroke="#2171b5"/><line x1="112" y1="118" x2="140" y2="108" stroke="#b9cfe0" stroke-width="1.6"/></g>
<g fill="#2171b5" fill-opacity=".8"><circle cx="36" cy="70" r=".7"/><circle cx="40" cy="66" r=".7"/><circle cx="44" cy="72" r=".7"/><circle cx="48" cy="64" r=".7"/><circle cx="52" cy="70" r=".7"/><circle cx="38" cy="76" r=".7"/><circle cx="46" cy="68" r=".7"/><circle cx="42" cy="62" r=".7"/><circle cx="35" cy="117" r=".7"/><circle cx="40" cy="114" r=".7"/><circle cx="45" cy="120" r=".7"/><circle cx="50" cy="112" r=".7"/><circle cx="38" cy="121" r=".7"/><circle cx="54" cy="116" r=".7"/><circle cx="118" cy="118" r=".7"/><circle cx="126" cy="114" r=".7"/><circle cx="134" cy="120" r=".7"/><circle cx="140" cy="112" r=".7"/><circle cx="130" cy="122" r=".7"/></g>
<g fill="#1e4680"><circle cx="58" cy="84" r=".7"/><circle cx="64" cy="80" r=".7"/><circle cx="70" cy="82" r=".7"/><circle cx="74" cy="76" r=".7"/><circle cx="78" cy="74" r=".7"/><circle cx="66" cy="86" r=".7"/><circle cx="60" cy="98" r=".7"/><circle cx="66" cy="96" r=".7"/><circle cx="72" cy="99" r=".7"/><circle cx="76" cy="94" r=".7"/><circle cx="82" cy="95" r=".7"/><circle cx="97" cy="102" r=".7"/><circle cx="101" cy="100" r=".7"/><circle cx="106" cy="98" r=".7"/><circle cx="110" cy="96" r=".7"/><circle cx="99" cy="96" r=".7"/></g>
<g class="s" font-size="2.3"><text x="22" y="37">0.10</text><text x="22" y="45">0.05</text><text x="22" y="52">0.00</text><text x="23" y="65">20.0</text><text x="23" y="73">17.5</text><text x="23" y="81">15.0</text><text x="24" y="101">220</text><text x="24" y="112">200</text><text x="24" y="123">180</text>
<text x="43" y="134">40</text><text x="62" y="134">50</text><text x="82" y="134">60</text><text x="99" y="134">15.0</text><text x="115" y="134">17.5</text><text x="132" y="134">20.0</text><text x="155" y="134">170 180 190 200 210 220 230</text></g>
<text class="t" x="121" y="163">Pairplot</text></svg></div>

<div class="c" style="left:550px;top:770px"><svg viewBox="0 0 242 174">
<line x1="28" y1="8" x2="28" y2="128" stroke="#ccc" stroke-width=".5"/><line x1="28" y1="128" x2="220" y2="128" stroke="#bbb" stroke-width=".8"/>
<g class="s" font-size="3"><text x="21" y="25">80</text><text x="21" y="50">70</text><text x="21" y="75">60</text><text x="21" y="100">50</text><text x="21" y="125">40</text><text x="26" y="136">0</text><text x="37" y="136">10000</text><text x="73" y="136">20000</text><text x="109" y="136">30000</text><text x="145" y="136">40000</text><text x="181" y="136">50000</text></g>
<g fill-opacity=".65">
<circle cx="53" cy="35" r="15" fill="#1e3f7a"/><circle cx="40" cy="60" r="15" fill="#1e3f7a"/><circle cx="46" cy="45" r="10" fill="#2f5a9a"/>
<circle cx="60" cy="22" r="6" fill="#9ecae1"/><circle cx="73" cy="25" r="4" fill="#6baed6"/><circle cx="189" cy="25" r="9" fill="#a9cfe6"/>
<circle cx="40" cy="77" r="6" fill="#2171b5"/><circle cx="40" cy="89" r="5" fill="#2171b5"/><circle cx="40" cy="104" r="7" fill="#4a8dca"/><circle cx="40" cy="112" r="4" fill="#2171b5"/><circle cx="70" cy="98" r="4" fill="#4a8dca"/>
<circle cx="90" cy="32" r="4" fill="#6baed6"/><circle cx="120" cy="24" r="5" fill="#6baed6"/><circle cx="135" cy="24" r="5" fill="#08306b"/><circle cx="150" cy="14" r="7" fill="#1e3f7a"/><circle cx="167" cy="20" r="5" fill="#6baed6"/><circle cx="155" cy="22" r="4" fill="#9ecae1"/><circle cx="128" cy="18" r="3" fill="#2171b5"/><circle cx="113" cy="39" r="3" fill="#1e3f7a"/><circle cx="105" cy="30" r="2" fill="#2171b5"/><circle cx="142" cy="20" r="3" fill="#6baed6"/>
<circle cx="52" cy="45" r="6" fill="#6baed6"/><circle cx="60" cy="50" r="3" fill="#2171b5"/><circle cx="48" cy="28" r="4" fill="#9ecae1"/><circle cx="58" cy="40" r="4" fill="#08306b"/><circle cx="44" cy="70" r="3" fill="#08306b"/><circle cx="50" cy="58" r="3" fill="#9ecae1"/>
</g>
<g fill="#08306b"><circle cx="179" cy="15.5" r="1.5"/><circle cx="213.7" cy="20" r="1"/><circle cx="207" cy="27" r="1"/><circle cx="100" cy="44" r=".8"/><circle cx="85" cy="70" r=".8"/><circle cx="50" cy="116" r=".8"/><circle cx="48" cy="92" r=".8"/></g>
<text class="t" x="121" y="163">Bubble Plot</text></svg></div>

<div class="c" style="left:1062px;top:770px"><svg viewBox="0 0 242 174">
<g stroke="#f0f0f0" stroke-width=".5"><line x1="38" y1="14" x2="220" y2="14"/><line x1="38" y1="39.5" x2="220" y2="39.5"/><line x1="38" y1="65" x2="220" y2="65"/><line x1="38" y1="90.5" x2="220" y2="90.5"/></g>
<line x1="38" y1="116" x2="220" y2="116" stroke="#999" stroke-width=".8"/>
<g stroke="#999" stroke-width=".5"><line x1="48" y1="116" x2="48" y2="100.7"/><line x1="66.3" y1="116" x2="66.3" y2="14"/><line x1="84.6" y1="116" x2="84.6" y2="49.7"/><line x1="102.9" y1="116" x2="102.9" y2="93"/><line x1="121.2" y1="116" x2="121.2" y2="70"/><line x1="139.5" y1="116" x2="139.5" y2="75"/><line x1="157.8" y1="116" x2="157.8" y2="37"/><line x1="176.1" y1="116" x2="176.1" y2="26.7"/><line x1="194.4" y1="116" x2="194.4" y2="105.8"/><line x1="212.7" y1="116" x2="212.7" y2="95.6"/></g>
<g fill="#2171b5"><circle cx="48" cy="100.7" r="1.8"/><circle cx="66.3" cy="14" r="1.8"/><circle cx="84.6" cy="49.7" r="1.8"/><circle cx="102.9" cy="93" r="1.8"/><circle cx="121.2" cy="70" r="1.8"/><circle cx="139.5" cy="75" r="1.8"/><circle cx="157.8" cy="37" r="1.8"/><circle cx="176.1" cy="26.7" r="1.8"/><circle cx="194.4" cy="105.8" r="1.8"/><circle cx="212.7" cy="95.6" r="1.8"/></g>
<g class="s" font-size="3" text-anchor="middle"><text x="32" y="15">2.0</text><text x="32" y="40.5">1.5</text><text x="32" y="66">1.0</text><text x="32" y="91.5">0.5</text><text x="32" y="117">0.0</text>
<text x="48" y="126">A</text><text x="66.3" y="126">B</text><text x="84.6" y="126">C</text><text x="102.9" y="126">D</text><text x="121.2" y="126">E</text><text x="139.5" y="126">F</text><text x="157.8" y="126">G</text><text x="176.1" y="126">H</text><text x="194.4" y="126">I</text><text x="212.7" y="126">J</text></g>
<text class="t" x="121" y="163">Lollipop Plot</text></svg></div>

<div class="c" style="left:1580px;top:770px"><svg viewBox="0 0 242 174">
<path d="M122,70 L122,18 A52,52 0 0 1 141.5,118.2 Z" fill="#6baed6"/>
<path d="M122,70 L141.5,118.2 A52,52 0 0 1 97.6,115.9 Z" fill="#08306b"/>
<path d="M122,70 L97.6,115.9 A52,52 0 0 1 70.5,77.2 Z" fill="#9ecae1"/>
<path d="M122,70 L70.5,77.2 A52,52 0 0 1 122,18 Z" fill="#2171b5"/>
<text class="t" x="121" y="160">Pie Chart</text></svg></div>

<div class="c" style="left:2092px;top:770px"><svg viewBox="0 0 242 174">
<g transform="translate(118.5,71)" fill="none" stroke="#777" stroke-width=".35">
<polygon points="0,-43 25.3,-34.8 40.9,-13.3 40.9,13.3 25.3,34.8 0,43 -25.3,34.8 -40.9,13.3 -40.9,-13.3 -25.3,-34.8"/>
<polygon points="0,-32.3 19,-26.1 30.7,-10 30.7,10 19,26.1 0,32.3 -19,26.1 -30.7,10 -30.7,-10 -19,-26.1"/>
<polygon points="0,-21.5 12.6,-17.4 20.4,-6.6 20.4,6.6 12.6,17.4 0,21.5 -12.6,17.4 -20.4,6.6 -20.4,-6.6 -12.6,-17.4"/>
<polygon points="0,-10.8 6.3,-8.7 10.2,-3.3 10.2,3.3 6.3,8.7 0,10.8 -6.3,8.7 -10.2,3.3 -10.2,-3.3 -6.3,-8.7"/>
<line x1="0" y1="0" x2="0" y2="-43"/><line x1="0" y1="0" x2="25.3" y2="-34.8"/><line x1="0" y1="0" x2="40.9" y2="-13.3"/><line x1="0" y1="0" x2="40.9" y2="13.3"/><line x1="0" y1="0" x2="25.3" y2="34.8"/><line x1="0" y1="0" x2="0" y2="43"/><line x1="0" y1="0" x2="-25.3" y2="34.8"/><line x1="0" y1="0" x2="-40.9" y2="13.3"/><line x1="0" y1="0" x2="-40.9" y2="-13.3"/><line x1="0" y1="0" x2="-25.3" y2="-34.8"/>
<polygon points="0,-24 12,-16.6 31.7,-10.3 16.4,5.3 10.1,13.9 0,18 -16.5,22.6 -20.5,6.7 -33.1,-10.8 -12.6,-17.4" fill="#3c7fd6" fill-opacity=".8" stroke="#111" stroke-width=".8"/>
</g>
<g class="s" font-size="3.2" fill="#222" text-anchor="middle"><text x="118.5" y="21">A</text><text x="148.5" y="31">J</text><text x="167" y="56">I</text><text x="167" y="88">H</text><text x="148.5" y="114">G</text><text x="118.5" y="124">F</text><text x="88.5" y="114">E</text><text x="70" y="88">D</text><text x="70" y="56">C</text><text x="88.5" y="31">B</text></g>
<text class="t" x="121" y="160">Radar Chart</text></svg></div>

<div class="c" style="left:2604px;top:770px"><svg viewBox="0 0 242 174">
<ellipse cx="88.5" cy="50" rx="38" ry="41" fill="#2171b5" fill-opacity=".65"/>
<ellipse cx="147" cy="47" rx="38" ry="41" fill="#9ecae1" fill-opacity=".65"/>
<ellipse cx="123.7" cy="85" rx="38" ry="41" fill="#08306b" fill-opacity=".6"/>
<text class="v" x="80" y="42">1287</text><text class="v" x="123.7" y="32">216</text><text class="v" x="167" y="42">919</text><text class="v" x="123.7" y="64">10</text><text class="v" x="91" y="81">90</text><text class="v" x="155.8" y="81">55</text><text class="v" x="123.7" y="109">348</text>
<text class="v" x="62.7" y="14" style="fill:#2171b5;font-size:5px">A</text><text class="v" x="184" y="14" style="fill:#9ecae1;font-size:5px">B</text><text class="v" x="123.7" y="131" style="fill:#3a4f8a;font-size:5px">C</text>
<text class="t" x="121" y="160">Venn Diagram</text></svg></div>

<!-- ROW 4 -->
<div class="c r4" style="left:36px;top:1146px"><svg viewBox="0 0 242 184">
<g transform="matrix(0.6695,0,0,0.24875,-18,-193)">
<line class="ns" x1="62" y1="815" x2="62" y2="1318" stroke="#ccc" stroke-width="1"/><line class="ns" x1="62" y1="1318" x2="355" y2="1318" stroke="#999" stroke-width="2"/>
<g fill="#fff" stroke="#2171b5">
<line class="ns" x1="117" y1="1065" x2="117" y2="1297" stroke-width="2"/><rect class="ns" x="85" y="1150" width="63" height="70" stroke-width="3"/><rect class="ns" x="88" y="1155" width="57" height="60" stroke="#9ecae1" stroke-width="1.5"/><line class="ns" x1="85" y1="1185" x2="148" y2="1185" stroke-width="4"/>
<line class="ns" x1="208" y1="865" x2="208" y2="1148" stroke-width="2"/><rect class="ns" x="176" y="978" width="64" height="80" stroke-width="3"/><rect class="ns" x="179" y="983" width="58" height="70" stroke="#9ecae1" stroke-width="1.5"/><line class="ns" x1="176" y1="1005" x2="240" y2="1005" stroke-width="4"/>
<line class="ns" x1="300" y1="898" x2="300" y2="1150" stroke-width="2"/><rect class="ns" x="268" y="1002" width="64" height="73" stroke-width="3"/><rect class="ns" x="271" y="1007" width="58" height="63" stroke="#9ecae1" stroke-width="1.5"/><line class="ns" x1="268" y1="1040" x2="332" y2="1040" stroke-width="4"/>
</g><circle cx="300" cy="835" r="2" fill="#2171b5"/></g>
<g class="s" font-size="3.2"><text x="18" y="15">60</text><text x="18" y="57">50</text><text x="18" y="98.5">40</text></g>
<text class="t" x="121" y="164">Boxplot</text></svg></div>

<div class="c r4" style="left:542px;top:1146px"><svg viewBox="0 0 242 184">
<g transform="matrix(0.364,0,0,0.1667,-43,-23)">
<line class="ns" x1="205" y1="190" x2="205" y2="937" stroke="#999" stroke-width="1"/><line class="ns" x1="205" y1="937" x2="742" y2="937" stroke="#999" stroke-width="2"/>
<path d="M305,415 C308,470 315,500 360,540 C395,565 395,600 360,630 C320,660 310,690 305,745 C300,690 290,660 250,630 C215,600 215,565 250,540 C295,500 302,470 305,415Z" fill="#2171b5"/>
<path d="M474,222 C478,300 490,330 540,360 C560,375 560,395 535,410 C520,425 525,440 535,455 C500,490 480,530 474,612 C468,530 448,490 413,455 C423,440 428,425 413,410 C388,395 388,375 408,360 C458,330 470,300 474,222Z" fill="#2171b5"/>
<path d="M642,222 C646,300 655,340 700,380 C725,400 725,430 718,455 C720,480 700,500 660,540 C648,560 644,580 642,605 C640,580 636,560 624,540 C584,500 564,480 566,455 C559,430 559,400 584,380 C629,340 638,300 642,222Z" fill="#2171b5"/>
<line class="ns" x1="305" y1="415" x2="305" y2="745" stroke="#08306b" stroke-width="1.5"/><line class="ns" x1="474" y1="222" x2="474" y2="612" stroke="#08306b" stroke-width="1.5"/><line class="ns" x1="642" y1="222" x2="642" y2="605" stroke="#08306b" stroke-width="1.5"/>
<g fill="#fff" stroke="#333"><rect class="ns" x="288" y="548" width="34" height="72" stroke-width="2"/><rect class="ns" x="457" y="372" width="34" height="83" stroke-width="2"/><rect class="ns" x="625" y="400" width="34" height="72" stroke-width="2"/></g>
<g stroke="#555"><line class="ns" x1="288" y1="580" x2="322" y2="580" stroke-width="3"/><line class="ns" x1="457" y1="400" x2="491" y2="400" stroke-width="3"/><line class="ns" x1="625" y1="436" x2="659" y2="436" stroke-width="3"/></g>
</g>
<g class="s" font-size="3.2"><text x="26" y="15.5">60</text><text x="26" y="44">50</text><text x="26" y="72">40</text><text x="26" y="100">30</text><text x="26" y="129">20</text></g>
<text class="t" x="121" y="163">Violin Plot</text></svg></div>

<div class="c r4" style="left:1056px;top:1146px"><svg viewBox="0 0 242 184">
<g transform="matrix(0.364,0,0,0.1667,-302,-23)">
<g stroke="#f0f0f0" stroke-width="1"><line class="ns" x1="910" y1="280" x2="1452" y2="280"/><line class="ns" x1="910" y1="350" x2="1452" y2="350"/><line class="ns" x1="910" y1="420" x2="1452" y2="420"/><line class="ns" x1="910" y1="490" x2="1452" y2="490"/><line class="ns" x1="910" y1="560" x2="1452" y2="560"/><line class="ns" x1="910" y1="630" x2="1452" y2="630"/><line class="ns" x1="910" y1="700" x2="1452" y2="700"/><line class="ns" x1="910" y1="770" x2="1452" y2="770"/><line class="ns" x1="968" y1="240" x2="968" y2="775"/><line class="ns" x1="1055" y1="240" x2="1055" y2="775"/><line class="ns" x1="1143" y1="240" x2="1143" y2="775"/><line class="ns" x1="1230" y1="240" x2="1230" y2="775"/><line class="ns" x1="1320" y1="240" x2="1320" y2="775"/><line class="ns" x1="1408" y1="240" x2="1408" y2="775"/></g>
<g id="cdl" stroke-width="1">
<line class="ns" x1="930" y1="545" x2="930" y2="655" stroke="#555"/><rect class="ns" x="926" y="572" width="8" height="78" fill="#666" stroke="#444"/>
<line class="ns" x1="942" y1="598" x2="942" y2="735" stroke="#4a8fd4"/><rect class="ns" x="938" y="605" width="8" height="30" fill="#6aa5e0" stroke="#4a8fd4"/>
<line class="ns" x1="980" y1="625" x2="980" y2="765" stroke="#555"/><rect class="ns" x="976" y="635" width="8" height="95" fill="#666" stroke="#444"/>
<rect class="ns" x="988" y="660" width="8" height="60" fill="#6aa5e0" stroke="#4a8fd4"/>
<line class="ns" x1="1005" y1="625" x2="1005" y2="755" stroke="#4a8fd4"/><rect class="ns" x="1001" y="628" width="8" height="92" fill="#6aa5e0" stroke="#4a8fd4"/>
<line class="ns" x1="1018" y1="555" x2="1018" y2="605" stroke="#4a8fd4"/><rect class="ns" x="1014" y="585" width="8" height="15" fill="#6aa5e0" stroke="#4a8fd4"/>
<rect class="ns" x="1026" y="557" width="8" height="43" fill="#666" stroke="#444"/>
<line class="ns" x1="1068" y1="530" x2="1068" y2="635" stroke="#4a8fd4"/><rect class="ns" x="1064" y="600" width="8" height="25" fill="#6aa5e0" stroke="#4a8fd4"/>
<rect class="ns" x="1076" y="588" width="8" height="60" fill="#666" stroke="#444"/>
<line class="ns" x1="1093" y1="650" x2="1093" y2="727" stroke="#555"/><rect class="ns" x="1089" y="655" width="8" height="15" fill="#666" stroke="#444"/>
<rect class="ns" x="1102" y="568" width="8" height="72" fill="#6aa5e0" stroke="#4a8fd4"/>
<rect class="ns" x="1114" y="532" width="8" height="38" fill="#6aa5e0" stroke="#4a8fd4"/>
<rect class="ns" x="1152" y="466" width="8" height="119" fill="#6aa5e0" stroke="#4a8fd4"/>
<rect class="ns" x="1164" y="393" width="8" height="62" fill="#6aa5e0" stroke="#4a8fd4"/>
<rect class="ns" x="1177" y="375" width="8" height="23" fill="#6aa5e0" stroke="#4a8fd4"/>
<rect class="ns" x="1190" y="368" width="8" height="27" fill="#6aa5e0" stroke="#4a8fd4"/>
<line class="ns" x1="1207" y1="345" x2="1207" y2="398" stroke="#555"/><rect class="ns" x="1203" y="362" width="8" height="36" fill="#666" stroke="#444"/>
<line class="ns" x1="1244" y1="370" x2="1244" y2="435" stroke="#555"/><rect class="ns" x="1240" y="392" width="8" height="10" fill="#666" stroke="#444"/>
<line class="ns" x1="1256" y1="322" x2="1256" y2="385" stroke="#555"/><rect class="ns" x="1252" y="372" width="8" height="6" fill="#666" stroke="#444"/>
<rect class="ns" x="1265" y="370" width="8" height="22" fill="#666" stroke="#444"/>
<line class="ns" x1="1282" y1="240" x2="1282" y2="360" stroke="#4a8fd4"/><rect class="ns" x="1278" y="262" width="8" height="98" fill="#6aa5e0" stroke="#4a8fd4"/>
<line class="ns" x1="1295" y1="355" x2="1295" y2="475" stroke="#4a8fd4"/><rect class="ns" x="1291" y="355" width="8" height="97" fill="#6aa5e0" stroke="#4a8fd4"/>
<line class="ns" x1="1332" y1="360" x2="1332" y2="425" stroke="#555"/><rect class="ns" x="1328" y="385" width="8" height="3" fill="#666" stroke="#444"/>
<rect class="ns" x="1341" y="350" width="8" height="48" fill="#6aa5e0" stroke="#4a8fd4"/>
<line class="ns" x1="1357" y1="283" x2="1357" y2="338" stroke="#4a8fd4"/><rect class="ns" x="1353" y="295" width="8" height="43" fill="#6aa5e0" stroke="#4a8fd4"/>
<line class="ns" x1="1370" y1="268" x2="1370" y2="330" stroke="#555"/><rect class="ns" x="1366" y="292" width="8" height="30" fill="#666" stroke="#444"/>
<line class="ns" x1="1383" y1="275" x2="1383" y2="345" stroke="#555"/><rect class="ns" x="1379" y="285" width="8" height="23" fill="#666" stroke="#444"/>
<line class="ns" x1="1420" y1="295" x2="1420" y2="342" stroke="#555"/><rect class="ns" x="1416" y="300" width="8" height="35" fill="#666" stroke="#444"/>
<line class="ns" x1="1433" y1="300" x2="1433" y2="348" stroke="#4a8fd4"/><rect class="ns" x="1429" y="322" width="8" height="23" fill="#6aa5e0" stroke="#4a8fd4"/>
<rect class="ns" x="1442" y="348" width="8" height="77" fill="#666" stroke="#444"/>
</g>
<line class="ns" x1="922" y1="875" x2="922" y2="940" stroke="#bbb"/><line class="ns" x1="1452" y1="875" x2="1452" y2="940" stroke="#bbb"/>
<g fill="#555"><rect x="926" y="918" width="8" height="20"/><rect x="976" y="930" width="8" height="22"/><rect x="1026" y="916" width="8" height="14"/><rect x="1076" y="924" width="8" height="16"/><rect x="1089" y="934" width="8" height="10"/><rect x="1203" y="876" width="8" height="14"/><rect x="1240" y="880" width="8" height="8"/><rect x="1265" y="878" width="8" height="10"/><rect x="1328" y="880" width="8" height="8"/><rect x="1366" y="862" width="8" height="12"/><rect x="1379" y="862" width="8" height="12"/><rect x="1416" y="866" width="8" height="10"/><rect x="1442" y="876" width="8" height="18"/></g>
<g fill="#6aa5e0"><rect x="938" y="928" width="8" height="10"/><rect x="988" y="934" width="8" height="16"/><rect x="1001" y="930" width="8" height="20"/><rect x="1014" y="920" width="8" height="10"/><rect x="1064" y="924" width="8" height="8"/><rect x="1102" y="918" width="8" height="16"/><rect x="1114" y="912" width="8" height="12"/><rect x="1152" y="900" width="8" height="26"/><rect x="1164" y="884" width="8" height="14"/><rect x="1177" y="882" width="8" height="6"/><rect x="1190" y="880" width="8" height="8"/><rect x="1278" y="858" width="8" height="24"/><rect x="1291" y="878" width="8" height="22"/><rect x="1341" y="876" width="8" height="12"/><rect x="1353" y="866" width="8" height="10"/><rect x="1429" y="872" width="8" height="6"/></g>
</g>
<g class="s" font-size="2"><text x="23" y="25">152</text><text x="23" y="37">150</text><text x="23" y="48">148</text><text x="23" y="60">146</text><text x="23" y="72">144</text><text x="23" y="83">142</text><text x="23" y="95">140</text><text x="23" y="106">138</text>
<text x="49" y="111">Oct 3</text><text x="49" y="114">2023</text><text x="81" y="111">Oct 10</text><text x="113" y="111">Oct 17</text><text x="145" y="111">Oct 24</text><text x="177" y="111">Oct 31</text><text x="209" y="111">Nov 7</text><text x="128" y="144">Date</text></g>
<text class="t" x="121" y="172">Candlestick Plot</text></svg></div>

<div class="c r4" style="left:1576px;top:1146px"><svg viewBox="0 0 242 184">
<g transform="matrix(0.6695,0,0,0.24875,-18,-193)">
<line class="ns" x1="62" y1="815" x2="62" y2="1318" stroke="#ccc" stroke-width="1"/><line class="ns" x1="62" y1="1318" x2="355" y2="1318" stroke="#999" stroke-width="2"/>
<g fill="#fff" stroke="#2171b5">
<line class="ns" x1="117" y1="1065" x2="117" y2="1297" stroke-width="2"/><rect class="ns" x="85" y="1150" width="63" height="70" stroke-width="3"/><rect class="ns" x="88" y="1155" width="57" height="60" stroke="#9ecae1" stroke-width="1.5"/><line class="ns" x1="85" y1="1185" x2="148" y2="1185" stroke-width="4"/>
<line class="ns" x1="208" y1="865" x2="208" y2="1148" stroke-width="2"/><rect class="ns" x="176" y="978" width="64" height="80" stroke-width="3"/><rect class="ns" x="179" y="983" width="58" height="70" stroke="#9ecae1" stroke-width="1.5"/><line class="ns" x1="176" y1="1005" x2="240" y2="1005" stroke-width="4"/>
<line class="ns" x1="300" y1="898" x2="300" y2="1150" stroke-width="2"/><rect class="ns" x="268" y="1002" width="64" height="73" stroke-width="3"/><rect class="ns" x="271" y="1007" width="58" height="63" stroke="#9ecae1" stroke-width="1.5"/><line class="ns" x1="268" y1="1040" x2="332" y2="1040" stroke-width="4"/>
</g><circle cx="300" cy="835" r="2" fill="#2171b5"/></g>
<g class="s" font-size="3.2"><text x="18" y="15">60</text><text x="18" y="57">50</text><text x="18" y="98.5">40</text></g>
<text class="t" x="121" y="164">Boxplot</text></svg></div>

<div class="c r4" style="left:2086px;top:1146px"><svg viewBox="0 0 242 184">
<g transform="matrix(0.364,0,0,0.1667,-43,-23)">
<line class="ns" x1="205" y1="190" x2="205" y2="937" stroke="#999" stroke-width="1"/><line class="ns" x1="205" y1="937" x2="742" y2="937" stroke="#999" stroke-width="2"/>
<path d="M305,415 C308,470 315,500 360,540 C395,565 395,600 360,630 C320,660 310,690 305,745 C300,690 290,660 250,630 C215,600 215,565 250,540 C295,500 302,470 305,415Z" fill="#2171b5"/>
<path d="M474,222 C478,300 490,330 540,360 C560,375 560,395 535,410 C520,425 525,440 535,455 C500,490 480,530 474,612 C468,530 448,490 413,455 C423,440 428,425 413,410 C388,395 388,375 408,360 C458,330 470,300 474,222Z" fill="#2171b5"/>
<path d="M642,222 C646,300 655,340 700,380 C725,400 725,430 718,455 C720,480 700,500 660,540 C648,560 644,580 642,605 C640,580 636,560 624,540 C584,500 564,480 566,455 C559,430 559,400 584,380 C629,340 638,300 642,222Z" fill="#2171b5"/>
<line class="ns" x1="305" y1="415" x2="305" y2="745" stroke="#08306b" stroke-width="1.5"/><line class="ns" x1="474" y1="222" x2="474" y2="612" stroke="#08306b" stroke-width="1.5"/><line class="ns" x1="642" y1="222" x2="642" y2="605" stroke="#08306b" stroke-width="1.5"/>
<g fill="#fff" stroke="#333"><rect class="ns" x="288" y="548" width="34" height="72" stroke-width="2"/><rect class="ns" x="457" y="372" width="34" height="83" stroke-width="2"/><rect class="ns" x="625" y="400" width="34" height="72" stroke-width="2"/></g>
<g stroke="#555"><line class="ns" x1="288" y1="580" x2="322" y2="580" stroke-width="3"/><line class="ns" x1="457" y1="400" x2="491" y2="400" stroke-width="3"/><line class="ns" x1="625" y1="436" x2="659" y2="436" stroke-width="3"/></g>
</g>
<g class="s" font-size="3.2"><text x="26" y="15.5">60</text><text x="26" y="44">50</text><text x="26" y="72">40</text><text x="26" y="100">30</text><text x="26" y="129">20</text></g>
<text class="t" x="121" y="163">Violin Plot</text></svg></div>

<div class="c r4" style="left:2604px;top:1146px"><svg viewBox="0 0 242 184">
<g transform="matrix(0.364,0,0,0.1667,-302,-23)">
<g stroke="#f0f0f0" stroke-width="1"><line class="ns" x1="910" y1="280" x2="1452" y2="280"/><line class="ns" x1="910" y1="350" x2="1452" y2="350"/><line class="ns" x1="910" y1="420" x2="1452" y2="420"/><line class="ns" x1="910" y1="490" x2="1452" y2="490"/><line class="ns" x1="910" y1="560" x2="1452" y2="560"/><line class="ns" x1="910" y1="630" x2="1452" y2="630"/><line class="ns" x1="910" y1="700" x2="1452" y2="700"/><line class="ns" x1="910" y1="770" x2="1452" y2="770"/><line class="ns" x1="968" y1="240" x2="968" y2="775"/><line class="ns" x1="1055" y1="240" x2="1055" y2="775"/><line class="ns" x1="1143" y1="240" x2="1143" y2="775"/><line class="ns" x1="1230" y1="240" x2="1230" y2="775"/><line class="ns" x1="1320" y1="240" x2="1320" y2="775"/><line class="ns" x1="1408" y1="240" x2="1408" y2="775"/></g>
<use href="#cdl"/>
<line class="ns" x1="922" y1="875" x2="922" y2="940" stroke="#bbb"/><line class="ns" x1="1452" y1="875" x2="1452" y2="940" stroke="#bbb"/>
<g fill="#555"><rect x="926" y="918" width="8" height="20"/><rect x="976" y="930" width="8" height="22"/><rect x="1026" y="916" width="8" height="14"/><rect x="1076" y="924" width="8" height="16"/><rect x="1089" y="934" width="8" height="10"/><rect x="1203" y="876" width="8" height="14"/><rect x="1240" y="880" width="8" height="8"/><rect x="1265" y="878" width="8" height="10"/><rect x="1328" y="880" width="8" height="8"/><rect x="1366" y="862" width="8" height="12"/><rect x="1379" y="862" width="8" height="12"/><rect x="1416" y="866" width="8" height="10"/><rect x="1442" y="876" width="8" height="18"/></g>
<g fill="#6aa5e0"><rect x="938" y="928" width="8" height="10"/><rect x="988" y="934" width="8" height="16"/><rect x="1001" y="930" width="8" height="20"/><rect x="1014" y="920" width="8" height="10"/><rect x="1064" y="924" width="8" height="8"/><rect x="1102" y="918" width="8" height="16"/><rect x="1114" y="912" width="8" height="12"/><rect x="1152" y="900" width="8" height="26"/><rect x="1164" y="884" width="8" height="14"/><rect x="1177" y="882" width="8" height="6"/><rect x="1190" y="880" width="8" height="8"/><rect x="1278" y="858" width="8" height="24"/><rect x="1291" y="878" width="8" height="22"/><rect x="1341" y="876" width="8" height="12"/><rect x="1353" y="866" width="8" height="10"/><rect x="1429" y="872" width="8" height="6"/></g>
</g>
<g class="s" font-size="2"><text x="23" y="25">152</text><text x="23" y="37">150</text><text x="23" y="48">148</text><text x="23" y="60">146</text><text x="23" y="72">144</text><text x="23" y="83">142</text><text x="23" y="95">140</text><text x="23" y="106">138</text>
<text x="49" y="111">Oct 3</text><text x="49" y="114">2023</text><text x="81" y="111">Oct 10</text><text x="113" y="111">Oct 17</text><text x="145" y="111">Oct 24</text><text x="177" y="111">Oct 31</text><text x="209" y="111">Nov 7</text><text x="128" y="144">Date</text></g>
<text class="t" x="121" y="172">Candlestick Plot</text></svg></div>

</body></html>
